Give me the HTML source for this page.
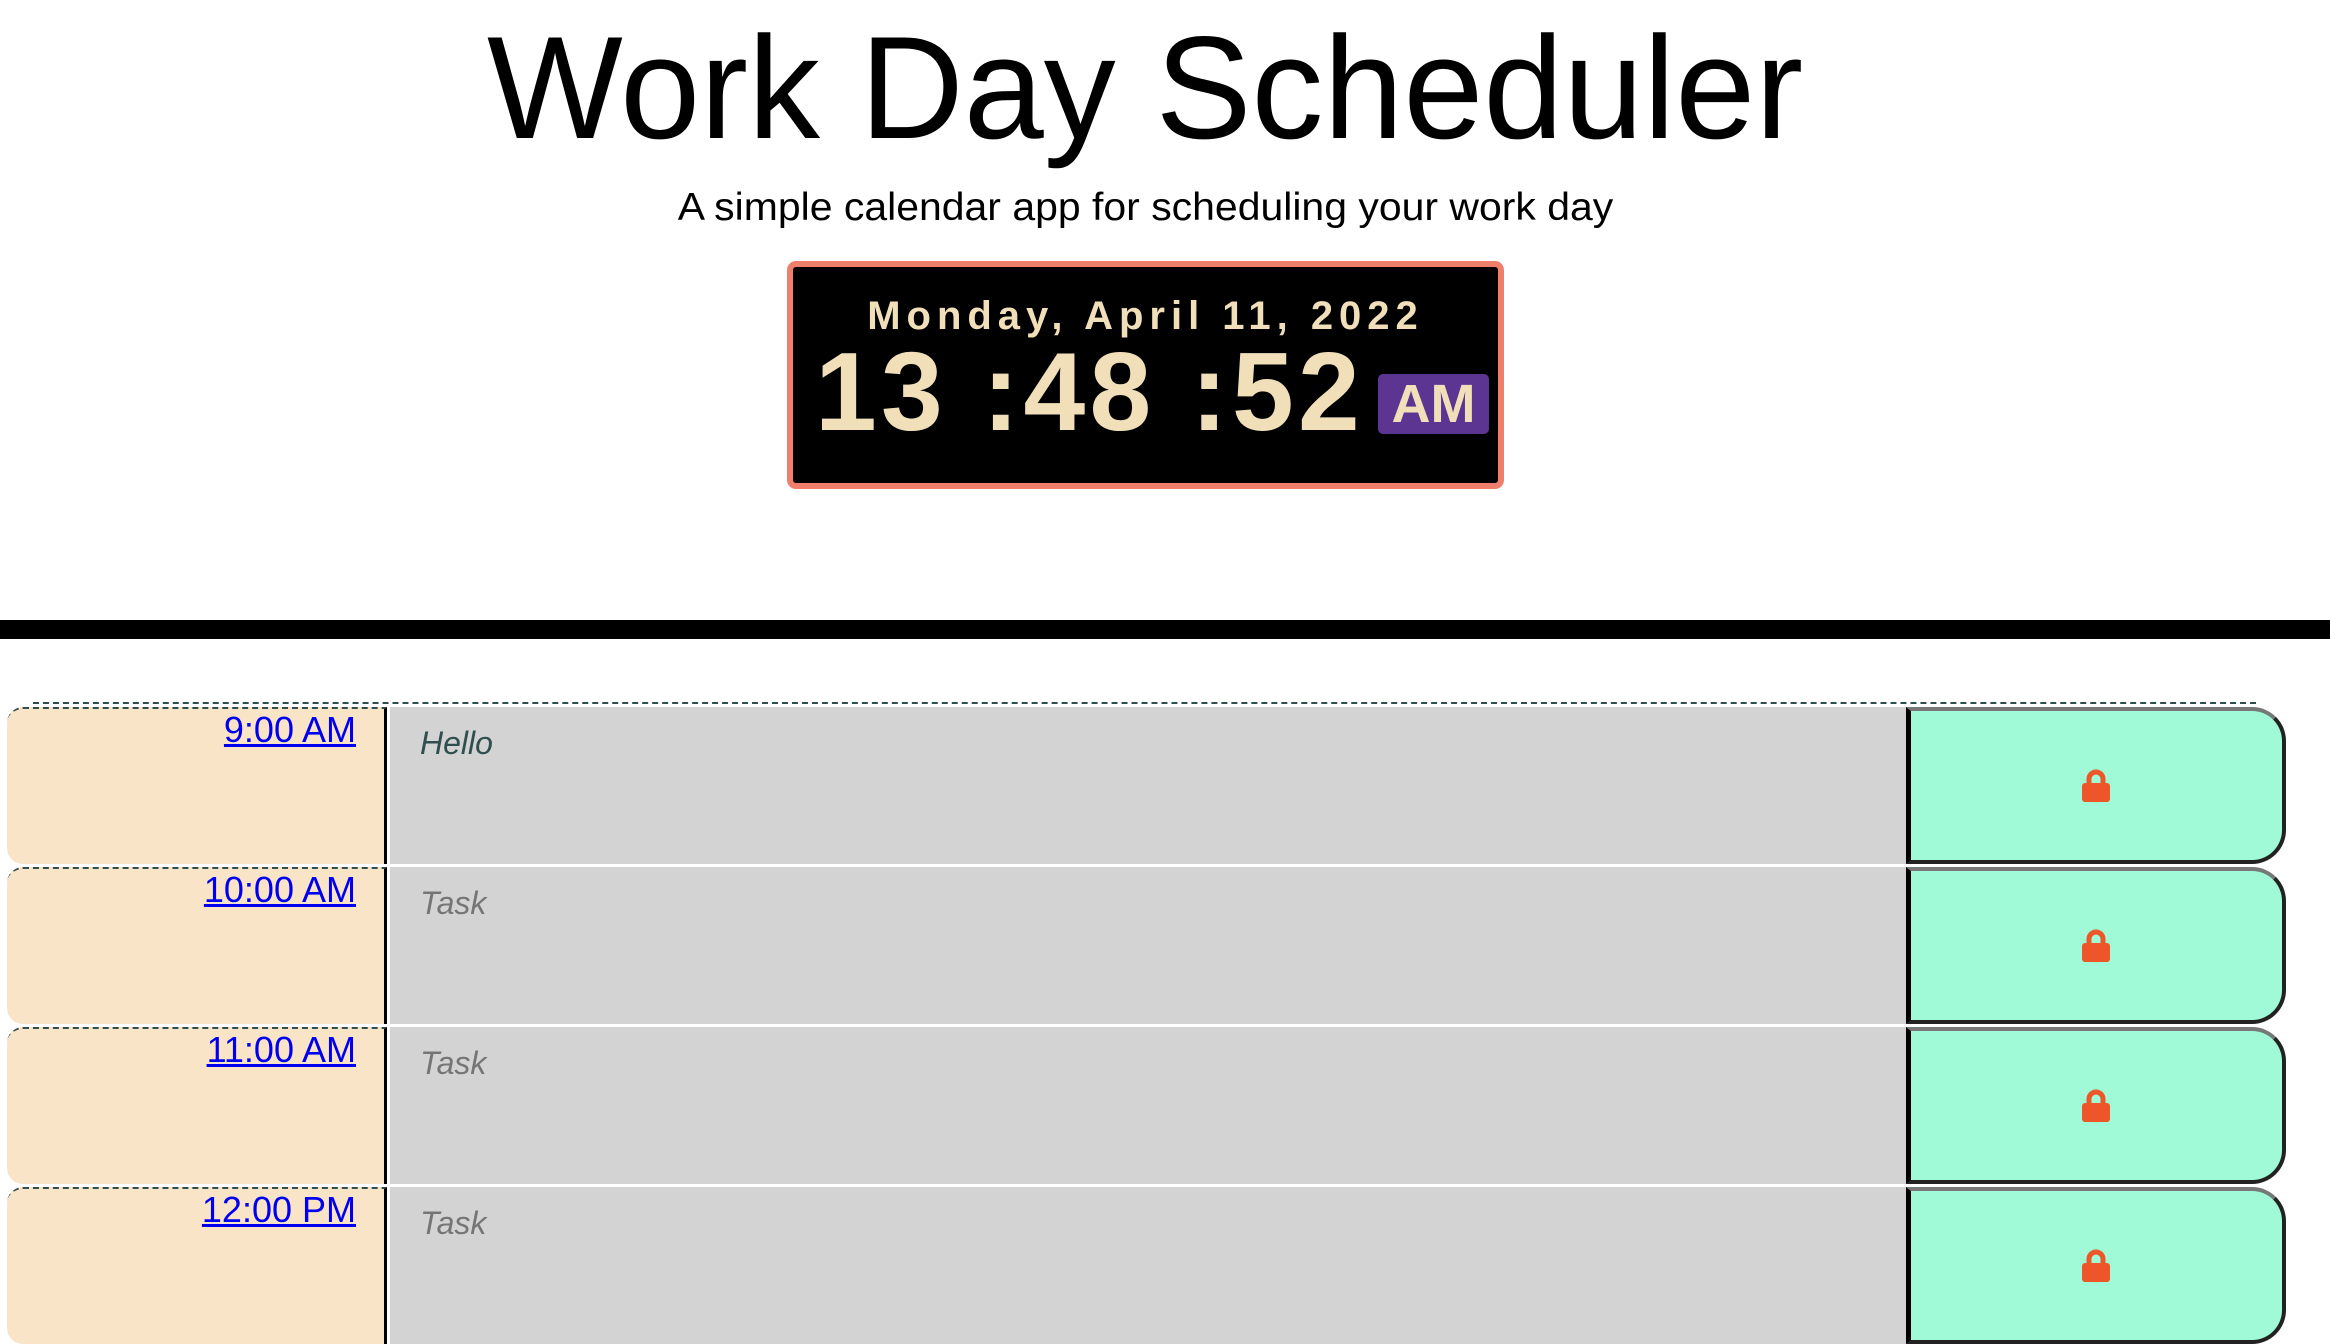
<!DOCTYPE html>
<html><head><meta charset="utf-8"><style>
html,body{margin:0;padding:0;width:2330px;height:1294px;overflow:hidden;background:#fff;font-family:"Liberation Sans",sans-serif;}
.abs{position:absolute;}
#title{left:-20px;width:2330px;top:8px;text-align:center;font-size:146px;line-height:160px;color:#000;}
#title span{display:inline-block;transform:scaleX(0.985);}
#sub{left:-20px;width:2330px;top:183px;text-align:center;font-size:39px;line-height:50px;color:#000;}
#sub span{display:inline-block;transform:scaleX(1.05);}
#clock{left:787px;top:261px;width:705px;height:216px;background:#000;border:6px solid #ef7f6a;border-radius:9px;}
#date{left:0;width:705px;top:26px;text-align:center;color:#f0dfb9;font-weight:bold;font-size:40px;letter-spacing:6px;line-height:46px;}
#time{left:22px;top:60px;color:#f0dfb9;font-weight:bold;font-size:111px;line-height:130px;letter-spacing:4.3px;white-space:nowrap;}
#ampm{left:585px;top:107px;width:111px;height:60px;background:#5c3593;border-radius:5px;color:#f0dfb9;font-weight:bold;font-size:54px;line-height:60px;text-align:center;}
#bar{left:0;top:620px;width:2330px;height:19px;background:#000;}
#dash{left:33px;top:702px;width:2223px;border-top:2px dashed #2f4f4f;}
.row{position:absolute;left:7px;width:2278px;height:157px;}
.hour{position:absolute;left:0;top:0;width:380px;height:157px;background:#fae4c8;border-top:2px dashed #2f4f4f;border-radius:16px 0 0 16px;border-right:3px solid #000;box-sizing:border-box;}
.hour a{position:absolute;right:28px;top:0px;color:#0000ee;font-size:36px;text-decoration:underline;}
.task{position:absolute;left:383px;top:0;width:1516px;height:157px;background:#d3d3d3;}
.task span{position:absolute;left:30px;top:18px;font-style:italic;font-size:32px;color:#757575;}
.task span.h{color:#2f4f4f;}
.save{position:absolute;left:1899px;top:0;width:380px;height:157px;background:#a0fad7;box-sizing:border-box;border-style:solid;border-width:4px 4px 4px 5px;border-color:#777 #222 #222 #000;border-radius:0 34px 34px 0;}
.save svg{position:absolute;left:170px;top:58px;}
</style></head><body>
<div id="title" class="abs"><span>Work Day Scheduler</span></div>
<div id="sub" class="abs"><span>A simple calendar app for scheduling your work day</span></div>
<div id="clock" class="abs">
<div id="date" class="abs">Monday, April 11, 2022</div>
<div id="time" class="abs">13 :48 :52</div>
<div id="ampm" class="abs">AM</div>
</div>
<div id="bar" class="abs"></div>
<div id="dash" class="abs"></div>

<div class="row" style="top:707px"><div class="hour"><a>9:00 AM</a></div><div class="task"><span class="h">Hello</span></div><div class="save"><svg width="30" height="34" viewBox="0 0 30 34"><path d="M8 16V10a7 7 0 0 1 14 0v6" fill="none" stroke="#ee5528" stroke-width="5"/><rect x="1" y="14" width="28" height="19" rx="3" fill="#ee5528"/></svg></div></div>
<div class="row" style="top:867px"><div class="hour"><a>10:00 AM</a></div><div class="task"><span>Task</span></div><div class="save"><svg width="30" height="34" viewBox="0 0 30 34"><path d="M8 16V10a7 7 0 0 1 14 0v6" fill="none" stroke="#ee5528" stroke-width="5"/><rect x="1" y="14" width="28" height="19" rx="3" fill="#ee5528"/></svg></div></div>
<div class="row" style="top:1027px"><div class="hour"><a>11:00 AM</a></div><div class="task"><span>Task</span></div><div class="save"><svg width="30" height="34" viewBox="0 0 30 34"><path d="M8 16V10a7 7 0 0 1 14 0v6" fill="none" stroke="#ee5528" stroke-width="5"/><rect x="1" y="14" width="28" height="19" rx="3" fill="#ee5528"/></svg></div></div>
<div class="row" style="top:1187px"><div class="hour"><a>12:00 PM</a></div><div class="task"><span>Task</span></div><div class="save"><svg width="30" height="34" viewBox="0 0 30 34"><path d="M8 16V10a7 7 0 0 1 14 0v6" fill="none" stroke="#ee5528" stroke-width="5"/><rect x="1" y="14" width="28" height="19" rx="3" fill="#ee5528"/></svg></div></div>
</body></html>
